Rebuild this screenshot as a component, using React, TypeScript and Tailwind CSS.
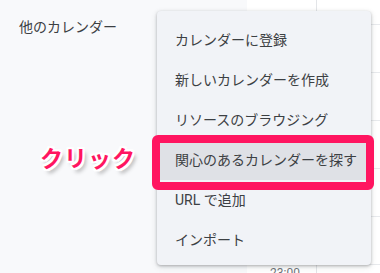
import React from 'react';

const items = [
  'カレンダーに登録',
  '新しいカレンダーを作成',
  'リソースのブラウジング',
  '関心のあるカレンダーを探す',
  'URL で追加',
  'インポート',
];

const font = { fontFamily: '"Roboto", "Noto Sans CJK JP", sans-serif' };

const App: React.FC = () => {
  return (
    <div className="relative w-[380px] h-[273px] overflow-hidden flex" style={font}>
      <div className="w-[247px] bg-[#f8f9fb] pl-[19px] pt-[17px]">
        <div className="text-[14px] leading-5 text-[#3c4043]">他のカレンダー</div>
      </div>

      <div className="flex-1 bg-white flex">
        <div className="w-[69px] flex flex-col justify-end items-end pr-[16px]">
          <div className="text-[12px] leading-none text-[#70757a] -mb-[6px]">23:00</div>
        </div>
        <div className="flex-1 border-l border-[#e3e5e8] flex flex-col pt-[24px]">
          {[0, 1, 2, 3, 4, 5].map(i => (
            <div key={i} className="h-[48px] shrink-0 border-t border-[#e8eaed]" />
          ))}
        </div>
      </div>

      {/* menu */}
      <div className="absolute left-[157px] top-[11px] w-[214px] h-[254px] bg-[#f1f3f7] rounded-[4px] shadow-[0_1px_3px_rgba(60,64,67,0.35),0_2px_6px_rgba(60,64,67,0.15)] pt-[9px]">
        {items.map((t, i) => (
          <div
            key={t}
            className={`h-10 flex items-center pl-[18px] text-[14px] text-[#3c4043] ${i === 3 ? 'bg-[#dfe1e6]' : ''}`}
          >
            {t}
          </div>
        ))}
      </div>

      {/* annotation frame */}
      <div className="absolute left-[152px] top-[135px] w-[222px] h-[55px] border-[8px] border-[#ff1560] rounded-[6px]" />

      <div
        className="absolute left-[40px] top-[146px] text-[23px] font-bold leading-none text-[#ff1560] tracking-[1px]"
        style={{
          fontFamily: '"Noto Sans CJK JP", sans-serif',
          textShadow:
            '-2px 0 0 #fff, 2px 0 0 #fff, 0 -2px 0 #fff, 0 2px 0 #fff, -2px -2px 0 #fff, 2px -2px 0 #fff, -2px 2px 0 #fff, 2px 2px 0 #fff, 3px 4px 4px rgba(0,0,0,0.35)',
        }}
      >
        クリック
      </div>
    </div>
  );
};

export default App;
